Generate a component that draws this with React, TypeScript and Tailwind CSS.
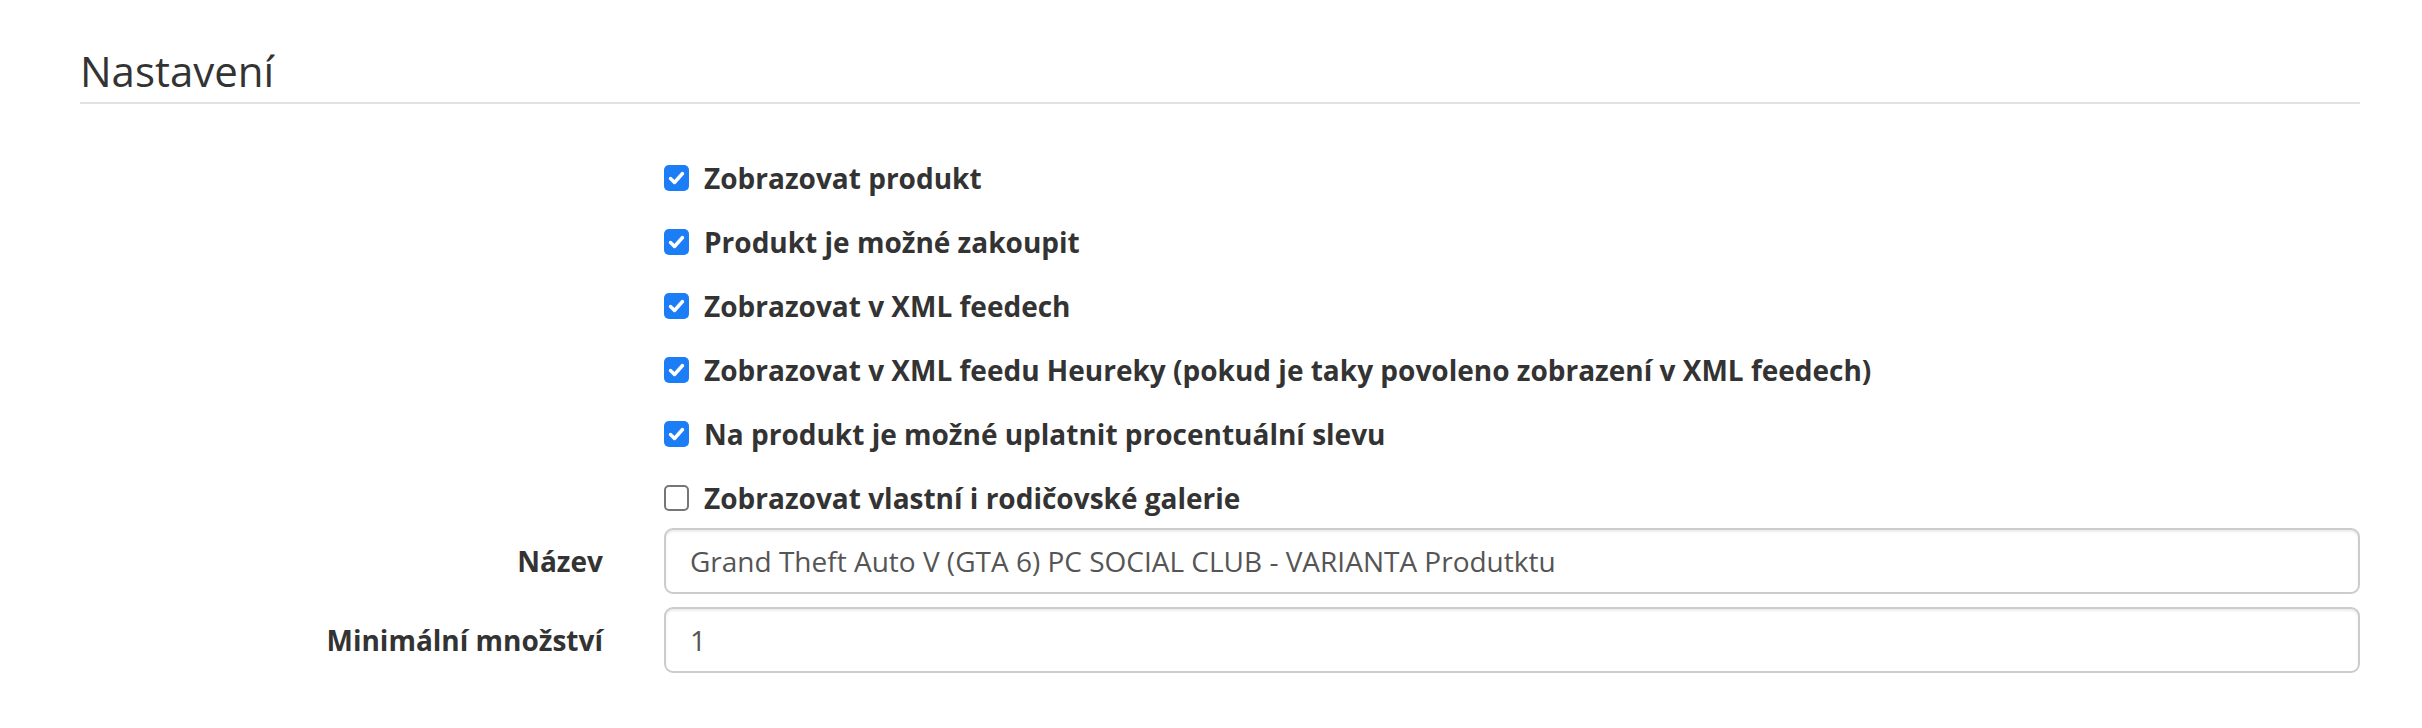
const options = [
  { label: "Zobrazovat produkt", checked: true },
  { label: "Produkt je možné zakoupit", checked: true },
  { label: "Zobrazovat v XML feedech", checked: true },
  { label: "Zobrazovat v XML feedu Heureky (pokud je taky povoleno zobrazení v XML feedech)", checked: true },
  { label: "Na produkt je možné uplatnit procentuální slevu", checked: true },
  { label: "Zobrazovat vlastní i rodičovské galerie", checked: false },
];

const fields = [
  { label: "Název", value: "Grand Theft Auto V (GTA 6) PC SOCIAL CLUB - VARIANTA Produtktu" },
  { label: "Minimální množství", value: "1" },
];

function Checkbox({ checked }: { checked: boolean }) {
  if (!checked) {
    return <span className="block w-[25px] h-[26px] shrink-0 rounded-[5px] border-2 border-[#767676] bg-white" />;
  }
  return (
    <span className="flex items-center justify-center w-[25px] h-[26px] shrink-0 rounded-[5px] bg-[#1b7ef6]">
      <svg width="25" height="26" viewBox="0 0 25 26">
        <path d="M6.5 13.5 L10.5 17.5 L18.5 8.5" fill="none" stroke="white" strokeWidth="3.4" strokeLinecap="round" strokeLinejoin="round" />
      </svg>
    </span>
  );
}

export default function App() {
  return (
    <div className="min-h-[728px] bg-white pl-[80px] pr-[62px] text-[#333]" style={{ fontFamily: '"Open Sans", "Liberation Sans", sans-serif' }}>
      {/* Nadpis sekce */}
      <h2 className="pt-[49px] pb-[9px] text-[42px] leading-[44px] font-normal border-b-2 border-[#e2e2e2]">Nastavení</h2>

      {/* Zaškrtávací volby */}
      <div className="flex flex-col gap-[22px] pt-[53px] pl-[584px]">
        {options.map((opt) => (
          <label key={opt.label} className="flex items-center gap-[15px] h-[42px] text-[28px] font-bold leading-[42px]">
            <Checkbox checked={opt.checked} />
            <span>{opt.label}</span>
          </label>
        ))}
      </div>

      {/* Textová pole */}
      <div className="flex flex-col gap-[13px] pt-[9px]">
        {fields.map((f) => (
          <div key={f.label} className="flex items-center">
            <div className="w-[523px] text-right text-[28px] font-bold">{f.label}</div>
            <div className="flex-1 pl-[61px]">
              <div className="h-[66px] flex items-center rounded-[9px] border-2 border-[#cccccc] px-[24px] text-[28px] text-[#555] shadow-[inset_0_2px_2px_rgba(0,0,0,0.075)]">
                {f.value}
              </div>
            </div>
          </div>
        ))}
      </div>
    </div>
  );
}
